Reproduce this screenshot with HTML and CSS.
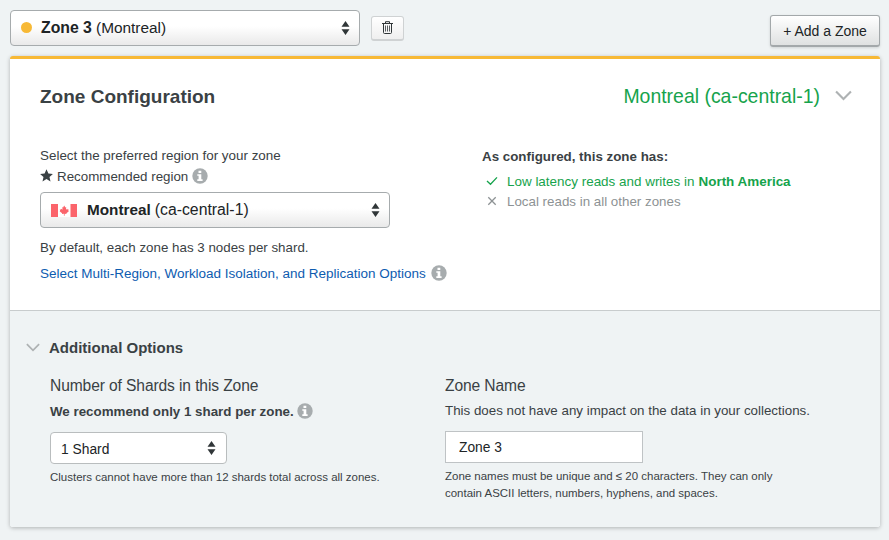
FILE: index.html
```html
<!DOCTYPE html>
<html lang="en">
<head>
<meta charset="utf-8">
<title>Zone Configuration</title>
<link rel="stylesheet" href="styles.css">
</head>
<body>
<svg class="defs" width="0" height="0" aria-hidden="true">
  <symbol id="sort" viewBox="0 0 8 14"><path d="M4 0L8 5.8H0zM0 8.2H8L4 14z" fill="#303638"/></symbol>
  <symbol id="info" viewBox="0 0 16 16"><circle cx="8" cy="8" r="7.7" fill="#a7acae"/><path d="M6.5 2.7h2.8v2.2H6.5zM5.3 6.2h4v5h1.3v1.7H5.3v-1.7h1.3V7.8H5.3z" fill="#fff"/></symbol>
  <symbol id="chevron" viewBox="0 0 16 10"><path d="M1 1.2L8 8.2L15 1.2" fill="none" stroke="#aeb2b3" stroke-width="2"/></symbol>
</svg>
<header class="toolbar">
  <button class="select select-zone"><span class="dot"></span><b class="zone-strong">Zone 3</b><span class="zone-city">(Montreal)</span><svg class="sort"><use href="#sort"/></svg></button>
  <button class="trash" aria-label="Delete"><svg width="11" height="13" viewBox="0 0 11 13" fill="none" stroke="#303638"><path d="M0 2.500h11M3.500 2.500V.700h4v1.800M1.500 2.800v8.700q0 1 1 1h6q1 0 1-1V2.800"/><path d="M3.500 4.500v6M5.500 4.500v6M7.500 4.500v6" stroke-width=".8"/></svg></button>
  <button class="add"><span>+ Add a Zone</span></button>
</header>
<main class="card">
  <section class="config">
    <div class="heading"><h1>Zone Configuration</h1><span class="region">Montreal (ca-central-1)</span><svg class="chevron"><use href="#chevron"/></svg></div>
    <div class="columns">
      <div class="preferred">
        <p class="line prompt">Select the preferred region for your zone</p>
        <p class="line recommended"><svg class="star" viewBox="0 0 13 13"><path d="M6.5.2l1.900 4.300 4.500.400-3.400 3.100 1 4.600-4-2.500-4 2.500 1-4.600L.1 4.900l4.500-.400z" fill="#3a4144"/></svg><span>Recommended region</span><svg class="info"><use href="#info"/></svg></p>
        <button class="select select-region"><svg class="flag" viewBox="0 0 26 13"><path fill="#fff" d="M0 0h26v13H0z"/><path fill="#fb646b" d="M0 0h7v13H0zM19.500 0H26v13h-6.500zM13.200 1.500l1.200 1.900.8-.4-.2 2.700 1.200-1 .3.800h1.200l-.4 1.400.6.400-2.500 2 .1.700-1.900-.2v2h-.7v-2l-1.900.2.100-.7-2.500-2 .600-.4-.4-1.400h1.200l.3-.8 1.200 1-.2-2.700.8.400z"/></svg><b class="city">Montreal</b><span class="code">(ca-central-1)</span><svg class="sort"><use href="#sort"/></svg></button>
        <p class="line nodes">By default, each zone has 3 nodes per shard.</p>
        <p class="line"><a>Select Multi-Region, Workload Isolation, and Replication Options</a><svg class="info"><use href="#info"/></svg></p>
      </div>
      <div class="summary">
        <p class="line summary-title">As configured, this zone has:</p>
        <p class="feature good"><svg viewBox="0 0 12 10"><path d="M1 5l3.500 3.300L11 1.400" fill="none" stroke="#16a34c" stroke-width="1.300"/></svg><span>Low latency reads and writes in</span><b>North America</b></p>
        <p class="feature muted"><svg viewBox="0 0 12 10"><path d="M2.300 1.300l7.400 7.400M9.700 1.300L2.300 8.700" fill="none" stroke="#8d9294" stroke-width="1.300"/></svg><span>Local reads in all other zones</span></p>
      </div>
    </div>
  </section>
  <section class="options">
    <div class="options-head"><svg class="chevron"><use href="#chevron"/></svg><h2>Additional Options</h2></div>
    <div class="fields">
      <div class="shards">
        <h3>Number of Shards in this Zone</h3>
        <p class="line"><b class="advice">We recommend only 1 shard per zone.</b><svg class="info"><use href="#info"/></svg></p>
        <button class="select select-shards"><span>1 Shard</span><svg class="sort"><use href="#sort"/></svg></button>
        <p class="hint shard-hint">Clusters cannot have more than 12 shards total across all zones.</p>
      </div>
      <div class="naming">
        <h3 class="name-title">Zone Name</h3>
        <p class="line impact">This does not have any impact on the data in your collections.</p>
        <input value="Zone 3" aria-label="Zone Name">
        <p class="hint name-hint">Zone names must be unique and ≤ 20 characters. They can only<br>contain ASCII letters, numbers, hyphens, and spaces.</p>
      </div>
    </div>
  </section>
</main>
</body>
</html>
```
FILE: styles.css
```css
* { box-sizing: border-box; }
html { background: #eff3f4; }
body { margin: 0; min-height: 540px; padding: 10px 9px 0 10px; background: #eff3f4; color: #3a4144; font: 13.35px/20px "Liberation Sans", Arial, sans-serif; }
.defs { position: absolute; }
h1, h2, h3, p { margin: 0; }
svg { display: block; flex: none; }
button, input { font: inherit; color: #202426; }
span, b, h1, h2, h3, a, p { white-space: nowrap; }
.toolbar { display: flex; height: 46px; align-items: flex-start; }
.select { display: flex; align-items: center; border: 1px solid #a6abad; border-radius: 4px; width: 350px; height: 36px; padding: 0 9px 0 10px; background: linear-gradient(#fff 45%, #e9e9e9); font-size: 16px; }
.sort { width: 9px; height: 14px; margin-left: auto; }
.dot { width: 11px; height: 11px; border-radius: 50%; background: #f7b936; margin: -1px 9px 0 0; }
.zone-strong { width: 55px; text-align: left; font-size: 15.8px; }
.zone-city { font-size: 15.4px; }
.trash { display: grid; place-items: center; width: 33px; height: 25px; margin: 6px 0 0 11px; padding: 0 0 1px; border: 1px solid #cfd2d3; border-bottom-width: 2px; border-radius: 3px; background: linear-gradient(#fff, #efefef); }
.add { width: 110px; height: 32px; margin: 5px 0 0 auto; padding: 1px 0 0; border: 1px solid #a3a8aa; border-bottom-width: 2px; border-radius: 3px; background: linear-gradient(#fff, #dfe1e1); box-shadow: 0 1px 3px #0002; font-size: 14px; }
.card { height: 471px; border-top: 3px solid #f7b936; border-radius: 3px; background: #fff; box-shadow: 0 1px 4px #0004; }
.config { height: 252px; padding: 24px 28px 0 30px; border-bottom: 1px solid #c8cccd; }
.heading { display: flex; align-items: center; height: 26px; font-size: 20px; }
h1 { font-size: 19px; padding-top: 2px; }
.region { margin-left: auto; color: #16a34c; font-size: 19.45px; }
.heading .chevron { width: 17px; height: 11px; margin-left: 15px; margin-top: -1px; }
.chevron { width: 14px; height: 9px; }
.columns { display: flex; padding-top: 37px; }
.preferred { width: 442px; }
.line { display: flex; align-items: center; height: 20px; }
.prompt { font-size: 13.42px; }
.recommended span { padding-top: 2px; }
.star { width: 13px; height: 13px; margin-right: 4px; margin-top: -1px; }
.info { width: 16px; height: 16px; margin-left: 4px; margin-top: -1px; }
.select-region { margin: 6px 0 10px; }
.flag { width: 26px; height: 13px; margin-right: 10px; }
.city { margin-right: 4px; font-size: 15.3px; }
.code { font-size: 15.8px; }
.nodes { margin-bottom: 6px; }
a { color: #0d5cb0; font-size: 13.49px; }
a + .info { margin-left: 5px; margin-top: -2px; }
.summary-title { font-weight: bold; margin-top: 1px; margin-bottom: 5px; }
.feature { display: flex; align-items: center; height: 20px; padding-left: 4px; }
.feature svg { width: 12px; height: 10px; margin-right: 9px; margin-top: -2px; }
.feature b { margin-left: 4px; }
.good { color: #16a34c; font-size: 13.45px; }
.muted { color: #8d9294; }
.options { height: 216px; padding: 27px 16px 0; background: #eff3f4; border-radius: 0 0 3px 3px; }
.options-head { display: flex; align-items: center; height: 20px; gap: 9px; }
.options-head .chevron { margin-top: -1px; }
h2 { font-size: 15px; }
.fields { display: flex; padding: 17px 0 0 24px; }
.shards { width: 395px; }
h3 { height: 22px; font-size: 15.6px; line-height: 22px; font-weight: normal; letter-spacing: -.11px; }
.fields .line { margin-top: 4px; }
.advice { padding-top: 2px; }
.advice + .info { margin-left: 3px; }
.select-shards { width: 177px; height: 32px; margin-top: 11px; background: #fff; border-color: #b9bdbe; font-size: 13.8px; padding: 0 10px; }
.select-shards span { padding-top: 3px; }
input { display: block; width: 198px; height: 32px; margin-top: 10px; padding: 1px 13px 0; border: 1px solid #bfc3c5; background: #fff; font-size: 13.8px; }
.hint { font-size: 11.47px; line-height: 17px; margin-top: 5px; }
```
